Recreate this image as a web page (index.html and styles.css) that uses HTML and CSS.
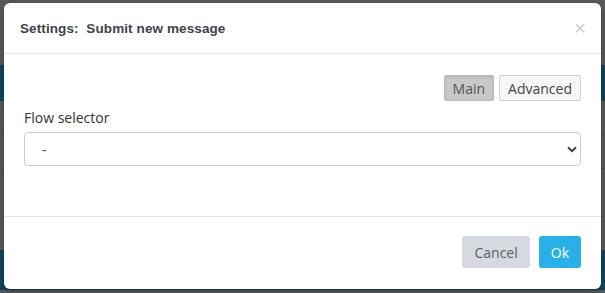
FILE: index.html
```html
<!DOCTYPE html>
<html lang="en">
<head>
  <meta charset="UTF-8" />
  <meta name="viewport" content="width=device-width, initial-scale=1.0"/>
  <title>Settings | Submit new message</title>
  <link rel="stylesheet" href="styles.css">
</head>
<body>
  <div class="page">
    <div class="page-top"></div>
    <div class="page-bar"></div>
    <div class="page-row"></div>
    <div class="page-row"></div>
    <div class="page-foot"></div>
  </div>

  <div class="modal">
    <div class="modal-header">
      <h4 class="modal-title">Settings:&nbsp; Submit new message</h4>
      <button class="close" type="button">&times;</button>
    </div>

    <div class="modal-body">
      <div class="tabs">
        <button class="tab active">Main</button>
        <button class="tab">Advanced</button>
      </div>

      <label for="flow">Flow selector</label>
      <div class="select-wrap">
        <select id="flow">
          <option value="">-</option>
        </select>
        <svg class="chevron" width="10" height="7" viewBox="0 0 10 7">
          <path d="M1 1.2 L5 5.2 L9 1.2" fill="none" stroke="#444" stroke-width="2"/>
        </svg>
      </div>
    </div>

    <div class="modal-footer">
      <button class="btn btn-cancel">Cancel</button>
      <button class="btn btn-ok">Ok</button>
    </div>
  </div>
</body>
</html>
```

FILE: styles.css
```css
body {
  margin: 0;
  padding: 0;
  background-color: #5a5a5a;
  font-family: 'Open Sans', sans-serif;
  font-size: 14px;
  color: #333;
  overflow: hidden;
}

.page {
  height: 293px;
}

.page-top {
  height: 65px;
}

.page-bar {
  height: 36px;
  background-color: #0e4760;
}

.page-row {
  height: 33px;
  border-bottom: 1px solid #4c4c4c;
}

.page-foot {
  height: 40px;
  margin-top: 81px;
  background-color: #0e4760;
}

.modal {
  position: absolute;
  top: 3px;
  left: 4px;
  width: 597px;
  background-color: #fff;
  border-radius: 6px;
  box-shadow: 0 3px 9px rgba(0, 0, 0, 0.3);
}

.modal-header {
  display: flex;
  align-items: center;
  justify-content: space-between;
  height: 50px;
  padding: 0 15px 0 16px;
  border-bottom: 1px solid #e5e5e5;
}

.modal-title {
  margin: 1px 0 0;
  font-family: 'Liberation Sans', Arial, sans-serif;
  font-size: 13.5px;
  letter-spacing: 0.1px;
  font-weight: bold;
  color: #3f4249;
}

.close {
  background: none;
  border: none;
  padding: 0;
  font-family: 'Liberation Sans', Arial, sans-serif;
  font-size: 20px;
  line-height: 1;
  color: #cfcfcf;
  cursor: pointer;
}

.modal-body {
  padding: 21px 20px 50px;
}

.tabs {
  display: flex;
  justify-content: flex-end;
  gap: 5px;
}

.tab {
  height: 26px;
  padding: 0 8px;
  font-family: 'Open Sans', sans-serif;
  font-size: 14px;
  color: #444;
  background-color: #f6f6f6;
  border: 1px solid #d2d2d2;
  border-radius: 2px;
  cursor: pointer;
}

.tab.active {
  color: #555;
  background-color: #c8c8c8;
  border-color: #bcbcbc;
  box-shadow: inset 0 1px 3px rgba(0, 0, 0, 0.12);
}

label {
  display: block;
  margin-top: 7px;
  margin-bottom: 4px;
  line-height: 20px;
  color: #333;
}

.select-wrap {
  position: relative;
}

select {
  display: block;
  width: 100%;
  height: 34px;
  padding: 0 30px 0 17px;
  font-family: 'Open Sans', sans-serif;
  font-size: 14px;
  color: #444;
  background-color: #fff;
  border: 1px solid #ccc;
  border-radius: 4px;
  appearance: none;
  -webkit-appearance: none;
}

.chevron {
  position: absolute;
  top: 14px;
  right: 4px;
  pointer-events: none;
}

.modal-footer {
  display: flex;
  justify-content: flex-end;
  gap: 9px;
  padding: 19px 20px 21px;
  border-top: 1px solid #e5e5e5;
}

.btn {
  height: 32px;
  padding: 0 12px;
  font-family: 'Open Sans', sans-serif;
  font-size: 14px;
  border: none;
  border-radius: 3px;
  cursor: pointer;
}

.btn-cancel {
  background-color: #d6d9e0;
  color: #5b6068;
}

.btn-ok {
  background-color: #28b0e8;
  color: #fff;
}
```
